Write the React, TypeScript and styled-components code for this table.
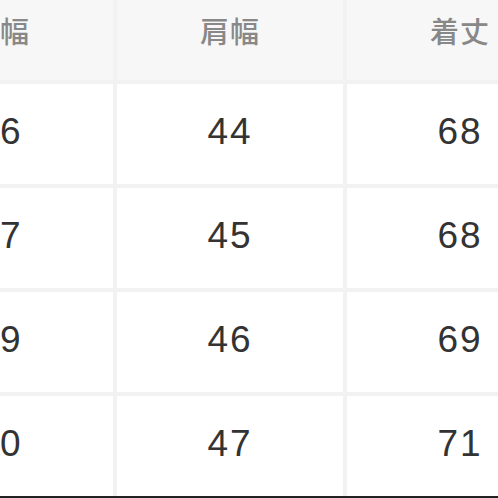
import React from 'react';
import styled, { createGlobalStyle } from 'styled-components';

const GlobalStyle = createGlobalStyle`
  html, body {
    margin: 0;
    padding: 0;
    background: #ffffff;
    overflow: hidden;
  }
  body {
    font-family: "Liberation Sans", "Noto Sans CJK JP", sans-serif;
  }
`;

const Page = styled.div`
  width: 498px;
  height: 498px;
  overflow: hidden;
  background: #ffffff;
`;

// table is wider than the shot; first column is half out of view
const Table = styled.div`
  display: grid;
  grid-template-columns: repeat(3, 226px);
  grid-template-rows: 80px repeat(4, 100px);
  gap: 4px;
  margin-left: -113px;
  width: max-content;
  background: #f2f2f2;
  border-bottom: 2px solid #222;
`;

const HeadCell = styled.div`
  display: flex;
  justify-content: center;
  align-items: flex-start;
  padding-top: 9px;
  background: #f7f7f7;
  color: #888888;
  font-family: "Noto Sans CJK JP", sans-serif;
  font-size: 29px;
  font-weight: 500;
  letter-spacing: 1px;
`;

const Cell = styled.div`
  display: flex;
  justify-content: center;
  align-items: center;
  padding-bottom: 4px;
  background: #ffffff;
  color: #333333;
  font-family: "Liberation Sans", sans-serif;
  font-size: 37px;
  letter-spacing: 2px;
`;

const headers = ['身幅', '肩幅', '着丈'];

const rows = [
  ['46', '44', '68'],
  ['47', '45', '68'],
  ['49', '46', '69'],
  ['50', '47', '71'],
];

export default function App() {
  return (
    <Page>
      <GlobalStyle />
      <Table>
        {headers.map((h) => (
          <HeadCell key={h}>{h}</HeadCell>
        ))}
        {rows.map((r, i) =>
          r.map((v, j) => <Cell key={`${i}-${j}`}>{v}</Cell>)
        )}
      </Table>
    </Page>
  );
}
